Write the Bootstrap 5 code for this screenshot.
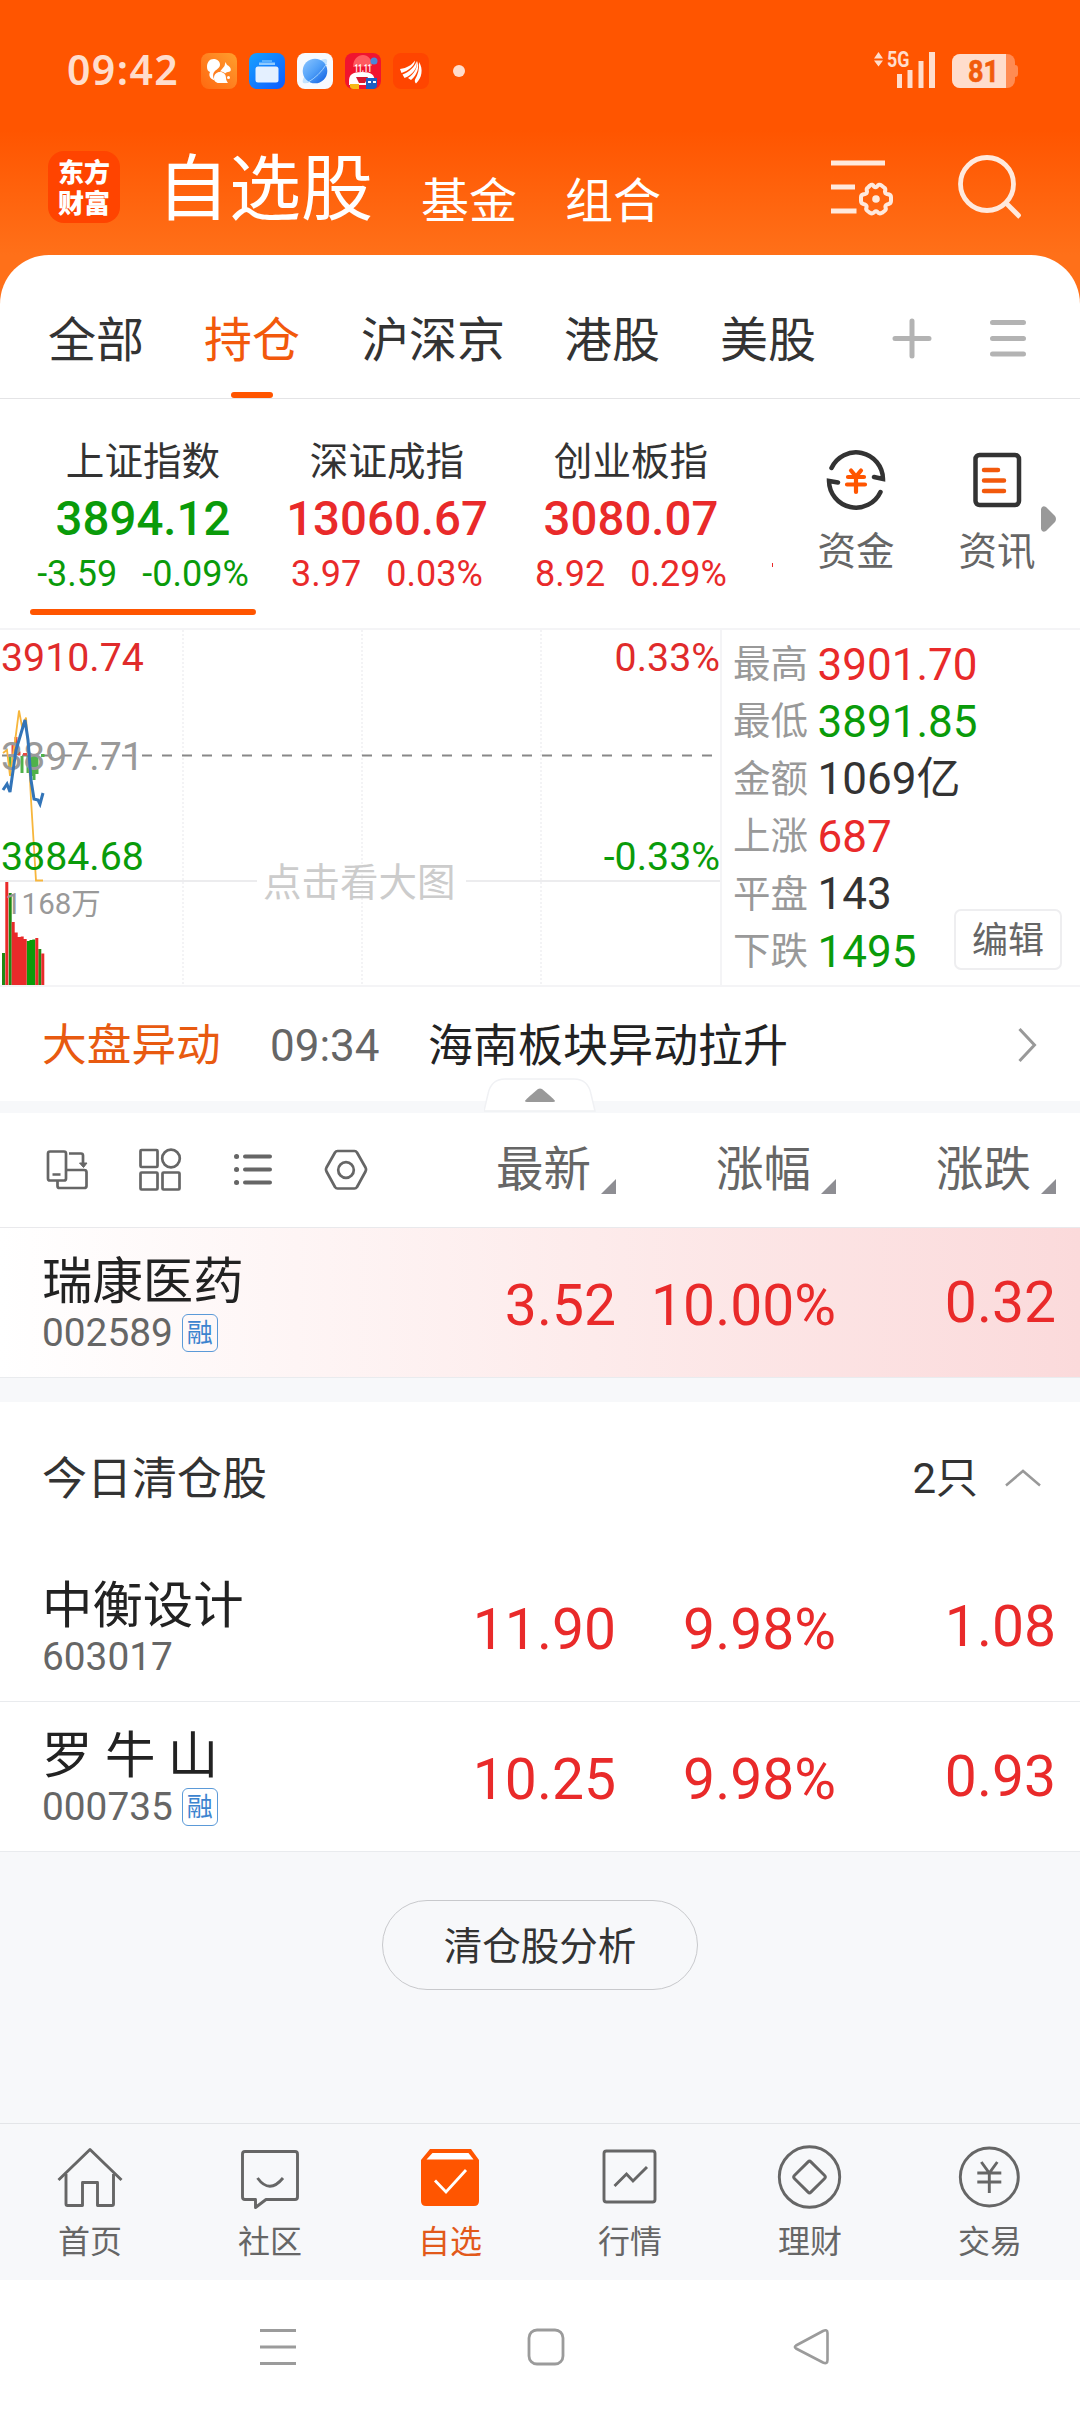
<!DOCTYPE html>
<html lang="zh-CN">
<head>
<meta charset="utf-8">
<meta name="viewport" content="width=device-width, initial-scale=1">
<title>自选股</title>
<link href="https://cdn.jsdelivr.net/npm/bootstrap@5.3.0/dist/css/bootstrap.min.css" rel="stylesheet">
<style>
:root{--up:#e92a2a;--down:#0a9b0a;--brand:#ff5500;--ink:#333;--sub:#666;--mute:#999;--band:#f7f8fa}
body{font-family:Roboto,"Noto Sans CJK SC",sans-serif;background:#fff;color:var(--ink);line-height:1;overflow-x:hidden}
.screen{width:1080px;height:2412px;overflow:hidden}
svg{display:block;flex:none}
.up{color:var(--up)}.down{color:var(--down)}
.top-area{height:304px;margin-bottom:-49px;background:linear-gradient(#ff5500 0,#ff5500 130px,#ff7019 255px)}
.status{height:110px;padding:32px 60px 0 67px}
.status .clock{font:600 41px/75px "Noto Sans",sans-serif;color:#ffddcc;width:134px;letter-spacing:1.4px}
.apps{gap:12px}
.heading{height:145px;padding:0 59px 0 48px;color:#fff}
.logo{width:72px;height:72px;border-radius:16px;background:#ff4400;font:900 26px/31px "Noto Sans CJK SC",sans-serif;padding-top:4px;margin-top:41px}
.t-main{font-size:72px;line-height:72px;margin:44px 0 0 37px}
.t-side{font-size:48px;line-height:48px;margin-top:68px}
.sheet{border-radius:49px 49px 0 0;background:#fff}
.tabs{height:144px;border-bottom:1px solid #e4e4e6;padding:0 54px 0 48px;font-size:48px;line-height:48px}
.tabs>div{padding-top:62px}
.tabs .on{color:#f2590c}
.tabs .on i{display:block;width:42px;height:6px;border-radius:3px;background:var(--brand);margin:27px auto 0}
.indices{height:229px;padding-left:21px}
.idx{width:244px;text-align:center}
.idx .nm{font-size:38.6px;line-height:40px;margin-top:43px}
.idx .val{font-size:47.400px;line-height:50px;font-weight:500;margin-top:12px}
.idx .chg{font-size:36px;line-height:40px;margin-top:10px;gap:25px}
.idx .bar{width:226px;height:6px;border-radius:3px;background:var(--brand);margin:15px auto 0}
.tick{width:1px;height:4px;background:var(--up);margin:164px 0 0 19px}
.tool{width:74px;font-size:38.5px;line-height:40px;color:var(--sub);text-align:center;white-space:nowrap}
.tool svg{margin:48px auto 19px}
.tool span{display:block;margin:0 -4px}
.quote{height:359px;border-top:2px solid #f4f4f6;border-bottom:2px solid #f4f4f6}
.chart text{font-size:39.300px}
.stats{padding:6px 0 0 11px;width:360px;border-left:2px solid #f4f4f6}
.stats dl{margin:0}
.stats .ln{height:57.4px;gap:9.500px}
.stats dt{font-weight:400;font-size:37.5px;color:var(--mute)}
.stats dd{margin:0;font-size:44px}
.edit{right:18px;top:279px;width:108px;height:61px;border:2px solid #eeeef0;border-radius:7px;color:var(--sub);font-size:36px;background:#fff;padding-top:3px}
.news{height:114px;padding:4px 42px 0;font-size:45px;line-height:45px}
.news .kind{color:#e85a10;width:228px;font-size:44.700px}
.news .tm{font-size:44px;color:var(--sub);width:158px}
.news .ti{color:#222}
.fold{height:12px;background:var(--band)}
.fold svg{left:484px;top:-23px}
.cols{height:115px;border-bottom:1px solid #e9e9ec;padding-left:45px;color:var(--sub)}
.cols .hd{width:220px;font-size:47.5px;line-height:50px;justify-content:flex-end;gap:10px;padding-right:4px}
.cols .hd i{width:15px;height:15px;background:#8e8e93;clip-path:polygon(100% 0,100% 100%,0 100%);margin-top:34px}
.stock{height:150px;border-bottom:1px solid #e9ebee;padding-left:42px}
.stock.hot{background:linear-gradient(90deg,#fff,#fdebeb 55%,#fbdadb)}
.stock .who{width:354px}
.stock .nm2{font-size:50.400px;line-height:50px;color:#222;margin-top:29px;white-space:pre}
.stock .code{font-size:38.8px;line-height:40px;color:var(--sub);margin-top:6px;gap:9px}
.tagbox{width:36px;height:38px;border:1.5px solid #5b9ad8;border-radius:6px;color:#3c84cf;font-size:26px;line-height:36px;display:flex;justify-content:center}
.stock .num{width:220px;text-align:right;font-size:57px;line-height:60px;margin-top:48px}
.stock .num:last-child{margin-top:45px}
.gap24{height:24px;background:var(--band)}
.sec{height:150px;padding:4px 39px 0 42px;font-size:45px}
.rest{height:271px;background:var(--band);padding-top:48px}
.pill{width:316px;height:90px;border:1.5px solid #c8c9cc;border-radius:45px;font-size:38.5px;color:var(--ink);margin:0 auto;padding-top:4px}
.dock{height:157px;background:#f7f8fa;border-top:1px solid #e3e5e8;color:var(--sub);font-size:32px;line-height:32px}
.dock>div{width:180px;text-align:center}
.dock svg{margin:18px auto 14px}
.dock .cur{color:#e2591a}
.sysnav{height:132px;padding:48px 249px 0 260px}
</style>
</head>
<body>
<div class="screen">
 <header class="top-area">
  <div class="status d-flex">
   <div class="clock">09:42</div>
   <div class="apps d-flex align-items-center">
    <svg width="36" height="36" viewBox="0 0 36 36"><defs><linearGradient id="a" x1="1" y1="0" x2="0" y2="1"><stop offset="0" stop-color="#ff9f2c"/><stop offset=".5" stop-color="#ff8120"/><stop offset="1" stop-color="#ff6a10"/></linearGradient></defs><rect width="36" height="36" rx="8" fill="url(#a)"/><path fill="#fff" d="M12.500 6c4 0 6.500 2.500 6.500 5.500 0 3.500-3 4.500-5 6.500-2.500 2.500-2.500 6 0 9.500-4-1-7-4.500-5-8.500-2-.5-3-2.500-3-5C6 9.500 8.500 6 12.500 6zM19 18.500l4.500-5.500 1-4 1.500 3c3 1.500 4.500 4 3.500 6-1.500 1.500-4 .5-5.500 2.500-1-1.500-3-2-5-2z"/><path fill="#fff" d="M19 19c3.500 0 6 2.500 6 6 0 2.500 1.500 4 2 5H18c-3.500 0-5-2.500-5-5 0-3.500 2.500-6 6-6z"/><circle cx="27.500" cy="24.500" r="1.500" fill="#fff"/></svg>
    <svg width="36" height="36" viewBox="0 0 36 36"><defs><linearGradient id="b" x1="0" y1="0" x2="1" y2="1"><stop offset="0" stop-color="#17a1ff"/><stop offset="1" stop-color="#0e5bff"/></linearGradient></defs><rect width="36" height="36" rx="8" fill="url(#b)"/><path d="M13 7h10v2H13z" fill="#58b0ff"/><path d="M10 9.500h16v2.500H10z" fill="#8fcaff"/><rect x="6.500" y="13.500" width="23" height="16" rx="2.500" fill="#e4f0ff"/></svg>
    <svg width="36" height="36" viewBox="0 0 36 36"><defs><linearGradient id="c" x1="0" y1="0" x2="1" y2="1"><stop offset="0" stop-color="#8cc6ff"/><stop offset=".5" stop-color="#4f9ff8"/><stop offset="1" stop-color="#0b5be0"/></linearGradient></defs><rect width="36" height="36" rx="8" fill="#f7fafe"/><path d="M25 6.500c5-1.500 6 0 4.500 4.500L11 29.500C6 31.500 4.500 30 6.500 25z" fill="#c2e3ff"/><circle cx="18" cy="18" r="12.300" fill="url(#c)"/><path d="M29.500 11c-5 8-11 14-19 18.500" stroke="#9bd0ff" stroke-width="1" fill="none"/></svg>
    <svg width="36" height="36" viewBox="0 0 36 36"><rect width="36" height="36" rx="8" fill="#f0142f"/><path d="M8 14c0-8 5-12 10-12s9 4 9 11z" fill="#ff5a5f"/><circle cx="29" cy="8" r="3.500" fill="#4a86d8"/><path d="M4 28c0-6 3-9 13-9s12 3 13 9v4H4z" fill="#fff"/><path d="M11 24h12l-3 6h-6z" fill="#d41830"/><text x="18" y="18.500" font-size="11" font-weight="700" fill="#fff" text-anchor="middle" textLength="17" lengthAdjust="spacingAndGlyphs">11.11</text><path d="M5 31h9v5H8a4 4 0 0 1-3-2z" fill="#f7b916"/><path d="M21 25h11v8a4 4 0 0 1-3 3h-8z" fill="#1c5fc4"/><path d="M23 28h3v2h-3zm5 0h3v2h-3z" fill="#fff"/></svg>
    <svg width="36" height="36" viewBox="0 0 36 36"><rect width="36" height="36" rx="8" fill="#ff4500"/><path fill="#fff" d="M7 16C14 15 19 12 22 7.500 22 13 15 18 8.500 20zM9.500 21.500C16 19 22 14 23.500 8c2 6-4 14-12 17zM15 25c6-4 9.500-10 9.500-17 2 6 0 14-6.500 19zM26 9c4.500 7 3 16-3 21.500-1-1-1.500-2.500-1-4C25 22 26.500 16 26 9z"/></svg>
    <svg width="36" height="36" viewBox="0 0 36 36"><circle cx="18" cy="18" r="6" fill="#ffddcc"/></svg>
   </div>
   <svg class="ms-auto" width="146" height="44" viewBox="875 46 146 44" style="margin-top:14px"><g fill="#ffddcc"><path d="M875 58.500l4.500-6.500 4.500 6.500zM875 60.500h9l-4.500 6zM898 74h5v14h-5zM908.500 70h5v18h-5zM919.500 61h5v27h-5zM930 52h6v36h-6z"/><text x="888" y="67" font-size="21.500" font-weight="700" textLength="22.500" lengthAdjust="spacingAndGlyphs">5G</text><rect x="953" y="54" width="63" height="34" rx="8" opacity=".4"/><path d="M1016 65q3 0 3 3v6q0 3-3 3z" opacity=".4"/><path d="M961 54h46v34h-46a8 8 0 0 1-8-8V62a8 8 0 0 1 8-8z"/></g><text x="984.500" y="82.300" font-size="30.500" font-weight="700" text-anchor="middle" fill="#f25c0c" stroke="#f25c0c" stroke-width=".6" textLength="31" lengthAdjust="spacingAndGlyphs">81</text></svg>
  </div>
  <div class="heading d-flex align-items-start">
   <div class="logo text-center">东方<br>财富</div>
   <h1 class="t-main fw-normal mb-0">自选股</h1>
   <div class="t-side" style="margin-left:48px">基金</div>
   <div class="t-side" style="margin-left:48px">组合</div>
   <svg class="ms-auto" width="64" height="64" viewBox="830 155 64 64" style="margin-top:45px" fill="none" stroke="#ffe9dd" stroke-width="4.800"><path d="M831 163h54M831 187h24M831 211h25.500"/><path stroke-width="4" stroke-linejoin="round" d="M870 185.500q2.500-2 4 1 1.500 1.500 3 0 2-3 4.500-1l2.500 2q2 1 1 4 0 2 2 2.500 4 .5 4 3v4q0 3-4 3.500-2 1-1.500 3 1 2-1 3.500l-2.500 1.800q-3 1.500-4.500-.8-1.500-1.500-3 0-2 2.300-4.500.8l-2.500-1.800q-2-1.500-1-3.500.5-2-1.500-3-4-.5-4-3.500v-4q0-2.500 4-3 2-.5 2-2.500-1-3 1-4z"/><circle cx="876" cy="199" r="3.800" fill="#ffe9dd" stroke="none"/></svg>
   <svg width="64" height="66" viewBox="957 154 64 66" style="margin:44px 0 0 63px" fill="none" stroke="#ffe9dd" stroke-width="4.800"><circle cx="987" cy="184" r="26.500"/><path d="M1006 203l14 14"/></svg>
  </div>
 </header>

 <main class="sheet">
  <nav class="tabs d-flex">
   <div>全部</div><div class="on" style="margin-left:60px">持仓<i></i></div><div style="margin-left:61px">沪深京</div><div style="margin-left:59px">港股</div><div style="margin-left:60px">美股</div>
   <svg class="ms-auto" width="40" height="42" viewBox="0 0 40 42" style="margin-top:63px" stroke="#b3b3b3" stroke-width="5" stroke-linecap="round"><path d="M3 20.500h34M20 3v35"/></svg>
   <svg width="36" height="42" viewBox="0 0 36 42" style="margin:63px 0 0 58px" stroke="#b3b3b3" stroke-width="5" stroke-linecap="round"><path d="M2.500 4.500h31M2.500 20.500h31M2.500 36h31"/></svg>
  </nav>

  <section class="indices d-flex">
   <div class="idx"><div class="nm">上证指数</div><div class="val down">3894.12</div><div class="chg down d-flex justify-content-center"><span>-3.59</span><span>-0.09%</span></div><div class="bar"></div></div>
   <div class="idx"><div class="nm">深证成指</div><div class="val up">13060.67</div><div class="chg up d-flex justify-content-center"><span>3.97</span><span>0.03%</span></div></div>
   <div class="idx"><div class="nm">创业板指</div><div class="val up">3080.07</div><div class="chg up d-flex justify-content-center"><span>8.92</span><span>0.29%</span></div></div>
   <div class="tick"></div>
   <div class="tool" style="margin-left:46px"><svg width="66" height="66" viewBox="-33 -33 66 66" fill="none" stroke="#333" stroke-width="4.500" stroke-linecap="round"><path d="M-24.500-12A27 27 0 0 1 27-1l-9-2M24.500 12A27 27 0 0 1-27 1l9 1.500"/><path stroke="#ff5500" stroke-width="4.200" d="M-5-9.500l5 6 5-6M-8-3H8M-9 4.500H9M0-3v15"/></svg><span>资金</span></div>
   <div class="tool" style="margin-left:67px"><svg width="66" height="66" viewBox="-33 -33 66 66" fill="none" stroke="#333" stroke-width="4.500" stroke-linecap="round"><rect x="-21.500" y="-25" width="43.500" height="50" rx="4"/><path stroke="#f2590c" d="M-13-10H1M-13 .500H7M-13 11H7"/></svg><span>资讯</span></div>
   <svg width="15" height="26" viewBox="0 0 15 26" style="margin:107px 0 0 7px"><path d="M0 3q1-4 5-2l9 9q2 3 0 6l-9 9q-4 2-5-2z" fill="#999"/></svg>
  </section>

  <section class="quote d-flex position-relative">
   <svg class="chart" width="720" height="355" viewBox="0 630 720 355">
    <g stroke="#f0f0f2" stroke-width="1.500" stroke-dasharray="2 2"><path d="M183 630V985M362 630V985M541 630V985"/></g>
    <path d="M0 881H257M466 881H720" stroke="#ececee" stroke-width="2"/>
    <path d="M2 755.500H720" stroke="#888" stroke-width="2" stroke-dasharray="10 10"/>
    <g fill="#e84a40"><path d="M11.500 743h3v11h-3zM14.500 737h3v18h-3zM17.500 751.500h3v4h-3zM23 753h4v2.500h-4z"/></g>
    <g fill="#4fb24a"><path d="M8.500 756h3v11h-3zM20.500 756h3v17h-3zM26.500 756h3v17h-3zM29.500 756h3v20h-3zM32.500 756h3v24h-3zM35.500 756h3v18h-3zM41 754h3.500v3H41z"/></g>
    <path d="M3 753l4-3 3 26 6-42 3-23.500 3 16 4-9 3 42 2 40 5 81h7" fill="none" stroke="#f7b63c" stroke-width="1.800"/>
    <g>
     <path fill="#1f8a14" d="M2 953h3v33H2zM8.700 893h3v93h-3zM38.300 949h3v37h-3z"/>
     <path fill="#0a9b0a" d="M26.700 941h3v45h-3zM29.500 940h3v46h-3zM32.300 939.500h3V986h-3z"/>
     <path fill="#e92a2a" d="M5.300 882h3v104h-3zM11.700 922h3v64h-3zM14.700 932.500h3V986h-3zM17.700 937h3v49h-3zM20.700 936.500h3V986h-3zM23.700 939h3v47h-3zM35.300 938h3v48h-3zM41.300 953.500h3V986h-3z"/>
    </g>
    <g font-family="Roboto,Noto Sans CJK SC,sans-serif">
     <text x="1" y="671" fill="#e02b2b">3910.74</text>
     <text x="1" y="770" fill="#999">3897.71</text>
     <text x="1" y="870" fill="#0a9b0a">3884.68</text>
     <text x="720" y="671" fill="#e02b2b" text-anchor="end">0.33%</text>
     <text x="720" y="870" fill="#0a9b0a" text-anchor="end">-0.33%</text>
     <text x="5" y="914" fill="#999" style="font-size:29.500px">1168万</text>
     <text x="263" y="896" fill="#ccc" style="font-size:38.500px">点击看大图</text>
    </g>
    <path d="M3 790l4-6 3 8 6-42 9-30 3 20 3 40 3 19 4 1 2 4 3-11" fill="none" stroke="#3274b8" stroke-width="3"/>
   </svg>
   <div class="stats"><dl>
    <div class="ln d-flex align-items-center"><dt>最高</dt><dd class="up">3901.70</dd></div>
    <div class="ln d-flex align-items-center"><dt>最低</dt><dd class="down">3891.85</dd></div>
    <div class="ln d-flex align-items-center"><dt>金额</dt><dd>1069亿</dd></div>
    <div class="ln d-flex align-items-center"><dt>上涨</dt><dd class="up">687</dd></div>
    <div class="ln d-flex align-items-center"><dt>平盘</dt><dd>143</dd></div>
    <div class="ln d-flex align-items-center"><dt>下跌</dt><dd class="down">1495</dd></div>
   </dl></div>
   <div class="edit position-absolute d-flex align-items-center justify-content-center">编辑</div>
  </section>

  <section class="news d-flex align-items-center">
   <span class="kind">大盘异动</span><span class="tm">09:34</span><span class="ti">海南板块异动拉升</span>
   <svg class="ms-auto" width="20" height="36" viewBox="0 0 20 36" fill="none" stroke="#999" stroke-width="3"><path d="M1.500 1l15 16-15 16"/></svg>
  </section>
  <div class="fold position-relative"><svg class="position-absolute" width="112" height="34" viewBox="0 0 112 34"><path d="M0 33L4 16Q7 1 21 1H90Q104 1 107 16L111 33z" fill="#fff" stroke="#f0f1f4" stroke-width="1.500"/><path d="M41 23q0-1 13-12 2-1 4 0 13 11 13 12 0 1-2 1H43q-2 0-2-1z" fill="#999"/></svg></div>

  <section class="cols d-flex align-items-center">
   <svg width="44" height="44" viewBox="0 0 44 44" fill="none" stroke="#666" stroke-width="2.700" stroke-linejoin="round"><rect x="3" y="3.500" width="18" height="29" rx="2"/><path d="M7.500 26.500h8M24 5.500h12q2 0 2 2V17M12.500 33v5q0 2 2 2H39q2.500 0 2.500-2V24q0-2-2.500-2H21"/><path d="M34.500 15h7.500l-3.500 4.500z" fill="#666" stroke-width="1"/></svg>
   <svg width="44" height="44" viewBox="0 0 44 44" style="margin-left:49px" fill="none" stroke="#666" stroke-width="2.700"><rect x="2.500" y="2" width="17" height="17" rx="1"/><circle cx="33" cy="10.500" r="8.800"/><rect x="2.500" y="24.500" width="17" height="17" rx="1"/><rect x="24.500" y="24.500" width="17" height="17" rx="1"/></svg>
   <svg width="44" height="44" viewBox="0 0 44 44" style="margin-left:50px" stroke="#666" stroke-width="4" stroke-linecap="round"><path d="M13 8.500h25M13 21.500h25M13 34.500h25"/><path stroke-width="5" d="M4.500 8.500h.1M4.500 21.500h.1M4.500 34.500h.1"/></svg>
   <svg width="44" height="44" viewBox="0 0 44 44" style="margin-left:48px" fill="none" stroke="#666" stroke-width="2.700" stroke-linejoin="round"><path d="M13.500 3h17q1.500 0 2.500 1.500l8.500 15q1 2 0 4L33 39q-1 1.500-2.500 1.500h-17Q12 40.500 11 39L2.500 23.500q-1-2 0-4L11 4.500Q12 3 13.500 3z"/><circle cx="22" cy="22" r="7.800"/></svg>
   <div class="hd d-flex" style="margin-left:32px">最新<i></i></div><div class="hd d-flex">涨幅<i></i></div><div class="hd d-flex">涨跌<i></i></div>
  </section>

  <section>
   <div class="stock hot d-flex"><div class="who"><div class="nm2">瑞康医药</div><div class="code d-flex align-items-center">002589<span class="tagbox">融</span></div></div><div class="num up">3.52</div><div class="num up">10.00%</div><div class="num up">0.32</div></div>
   <div class="gap24"></div>
   <div class="sec d-flex align-items-center"><span>今日清仓股</span><span class="ms-auto" style="font-size:42px">2只</span><svg width="36" height="18" viewBox="0 0 36 18" style="margin:-2px 0 0 27px" fill="none" stroke="#999" stroke-width="2.500"><path d="M1 16.500l17-14.500 17 14.500"/></svg></div>
   <div class="stock d-flex"><div class="who"><div class="nm2">中衡设计</div><div class="code d-flex align-items-center">603017</div></div><div class="num up">11.90</div><div class="num up">9.98%</div><div class="num up">1.08</div></div>
   <div class="stock d-flex"><div class="who"><div class="nm2">罗 牛 山</div><div class="code d-flex align-items-center">000735<span class="tagbox">融</span></div></div><div class="num up">10.25</div><div class="num up">9.98%</div><div class="num up">0.93</div></div>
  </section>
  <div class="rest"><div class="pill d-flex align-items-center justify-content-center">清仓股分析</div></div>
 </main>

 <footer>
  <div class="dock d-flex">
   <div><svg width="70" height="70" viewBox="0 0 70 70" fill="none" stroke="#666" stroke-width="2.900" stroke-linejoin="round"><path d="M3.500 47L35 16.500 66.500 47" transform="translate(0 -9)"/><path d="M11 32v30q0 1.500 1.500 1.500H27.500V40.500h15v23H57q1.500 0 1.500-1.500V32"/></svg>首页</div>
   <div><svg width="70" height="70" viewBox="0 0 70 70" fill="none" stroke="#666" stroke-width="2.900" stroke-linejoin="round"><path d="M10 9.500h50q2.500 0 2.500 2.500v43q0 2.500-2.500 2.500H31l-10.500 8v-8H10q-2.500 0-2.500-2.500V12q0-2.500 2.500-2.500z"/><path d="M22.500 36q12 16.500 25.500 0"/></svg>社区</div>
   <div class="cur"><svg width="70" height="70" viewBox="0 0 70 70"><path d="M6 18L15 7h41l8 11v41q0 5-5 5H11q-5 0-5-5z" fill="#ff5500"/><path d="M17.500 11h36l5 6.500H11.500z" fill="#fff"/><path d="M20 38.500l11 11.500 20-22" fill="none" stroke="#fff" stroke-width="2.800"/></svg>自选</div>
   <div><svg width="70" height="70" viewBox="0 0 70 70" fill="none" stroke="#666" stroke-width="2.900"><rect x="9" y="9" width="51" height="51" rx="2.500"/><path d="M19.500 44l12-12 6.500 7L52 25"/></svg>行情</div>
   <div><svg width="70" height="70" viewBox="0 0 70 70" fill="none" stroke="#666" stroke-width="2.900" stroke-linejoin="round"><circle cx="34.500" cy="35" r="30.200"/><rect x="22.800" y="23.300" width="23.400" height="23.400" rx="2" transform="rotate(45 34.500 35)"/></svg>理财</div>
   <div><svg width="70" height="70" viewBox="0 0 70 70" fill="none" stroke="#666" stroke-width="2.900"><circle cx="34.300" cy="35" r="29"/><path d="M26.300 20l8 11 8-11M22.300 31h24M22.300 40h24M34.300 31v20"/></svg>交易</div>
  </div>
  <div class="sysnav d-flex justify-content-between">
   <svg width="36" height="38" viewBox="0 0 36 38" stroke="#9b9b9b" stroke-width="3"><path d="M0 2.500h36M0 19h36M0 35.500h36"/></svg>
   <svg width="38" height="38" viewBox="0 0 38 38" style="margin-left:3px" fill="none" stroke="#9b9b9b" stroke-width="2.800"><rect x="2" y="2" width="34" height="34" rx="8"/></svg>
   <svg width="38" height="38" viewBox="0 0 38 38" fill="none" stroke="#9b9b9b" stroke-width="2.600" stroke-linejoin="round"><path d="M3 17.500L30 3Q34.500 1 34.500 5V32Q34.500 36.500 30 34.500L3 20.500Q.800 19 3 17.500z"/></svg>
  </div>
 </footer>
</div>
<script src="https://cdn.jsdelivr.net/npm/bootstrap@5.3.0/dist/js/bootstrap.bundle.min.js"></script>
</body>
</html>
